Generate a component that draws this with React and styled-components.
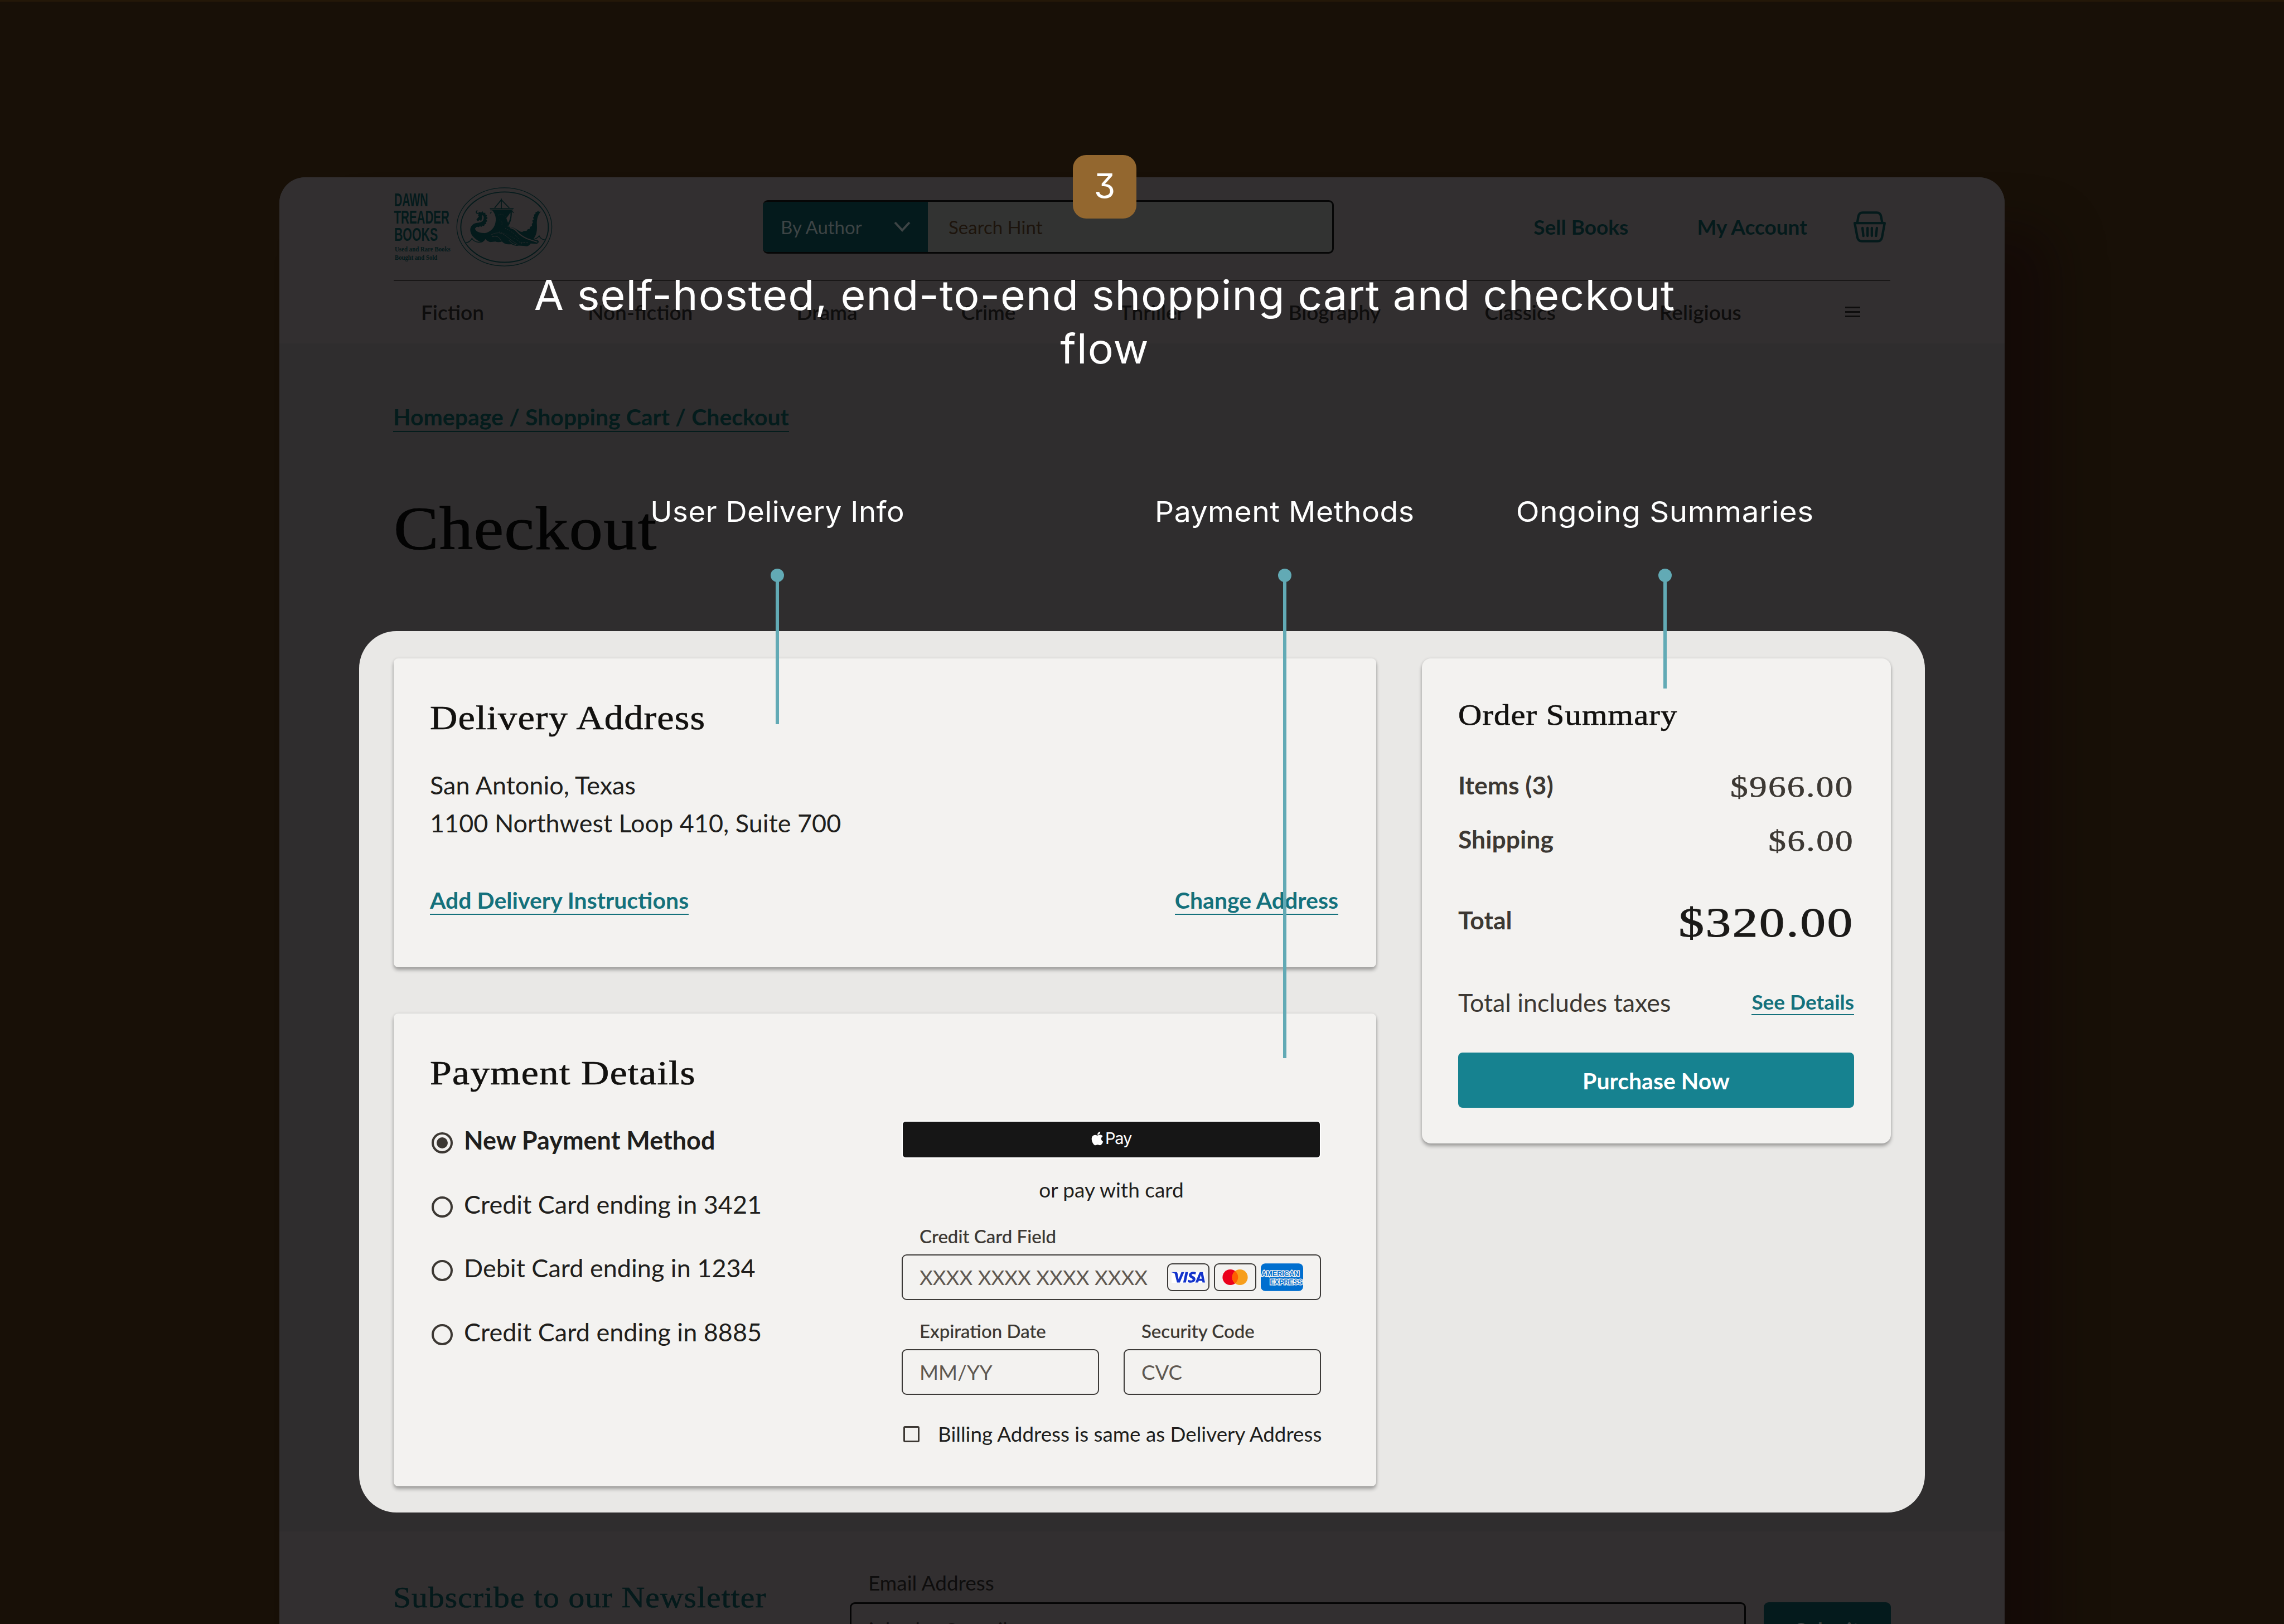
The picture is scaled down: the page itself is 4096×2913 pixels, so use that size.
import React from 'react';
import styled, { createGlobalStyle } from 'styled-components';
import { FaApple } from 'react-icons/fa';
import { SiVisa } from 'react-icons/si';

const sans = "Lato, 'Liberation Sans', sans-serif";
const serif = "'Liberation Serif', serif";
const display = "Inter, 'Liberation Sans', sans-serif";

const GlobalStyle = createGlobalStyle`
  * {
    box-sizing: border-box;
  }
  body {
    margin: 0;
    background: #181007;
    font-family: ${sans};
  }
  h1, h2, p {
    margin: 0;
    font-weight: 400;
  }
`;

const Stage = styled.div`
  position: relative;
  width: 4096px;
  height: 2913px;
  overflow: hidden;
  padding: 315px 501px 0 501px;
  background: #181007;
  border-top: 3px solid #241808;
`;

const Window = styled.div`
  height: 2700px;
  border-radius: 46px 46px 0 0;
  overflow: hidden;
  background: #2f2d2e;
  box-shadow: 90px 90px 90px rgba(14, 2, 8, 0.35);
`;

const Header = styled.header`
  height: 298px;
  padding: 0 205px;
  background: #322f30;
`;

const TopBar = styled.div`
  display: flex;
  align-items: center;
  height: 177px;
`;

const Search = styled.div`
  display: flex;
  width: 1024px;
  height: 96px;
  margin-left: 377px;
  border-radius: 9px;
  border: 3px solid #060606;
  border-left: 0;
  background: #323332;
  overflow: hidden;
`;

const SearchType = styled.div`
  display: flex;
  align-items: center;
  justify-content: space-between;
  width: 296px;
  margin: -3px 0;
  padding: 0 31px 0 32px;
  background: #041a1c;
  color: #3d4445;
  font-size: 33px;
`;

const SearchHint = styled.div`
  padding-left: 37px;
  line-height: 90px;
  font-size: 33px;
  color: #1d140c;
`;

const Actions = styled.div`
  display: flex;
  align-items: center;
  margin-left: auto;
  margin-right: 8px;
  font-size: 37px;
  font-weight: 700;
  color: #041a1b;
`;

const Action = styled.span`
  margin-right: ${(p) => p.$gap}px;
`;

const Nav = styled.nav`
  display: flex;
  align-items: center;
  justify-content: space-between;
  height: 113px;
  margin-top: 7px;
  padding: 0 54px 0 49px;
  border-top: 2px solid #191717;
  font-size: 37px;
  font-weight: 600;
  color: #0e0d0d;
`;

const Burger = styled.div`
  width: 27px;
  height: 19px;
  border: solid #0e0d0d;
  border-width: 3px 0;
  padding-top: 5px;

  &::after {
    content: '';
    display: block;
    height: 3px;
    background: #0e0d0d;
  }
`;

const Body = styled.main`
  height: 2131px;
  padding: 107px 143px 0;
`;

const Link = styled.span`
  display: inline-block;
  font-size: ${(p) => p.$size || 41}px;
  line-height: ${(p) => p.$line || 50}px;
  font-weight: 700;
  color: ${(p) => p.$color || '#14717c'};
  border-bottom: 2px solid;
`;

const Crumbs = styled.div`
  display: flex;
  margin-left: 61px;
`;

const Title = styled.h1`
  margin: 113px 0 0 62px;
  font-family: ${serif};
  font-size: 110px;
  line-height: 121px;
  letter-spacing: 1px;
  color: #030303;
  transform: scaleX(1.1);
  transform-origin: left;
  -webkit-text-stroke: 1px;
`;

const Spotlight = styled.section`
  display: grid;
  grid-template-columns: 1762px 841px;
  column-gap: 82px;
  align-items: start;
  height: 1581px;
  margin-top: 123px;
  padding: 49px 62px;
  border-radius: 67px;
  background: #e9e8e6;
`;

const Column = styled.div`
  display: flex;
  flex-direction: column;
  gap: 83px;
`;

const Card = styled.div`
  height: ${(p) => p.$height}px;
  padding: 71px 66px 0 65px;
  border-radius: ${(p) => p.$radius || 8}px;
  background: #f3f2f0;
  box-shadow: 0 5px 6px rgba(0, 0, 0, 0.3), 0 0 5px rgba(0, 0, 0, 0.1);
`;

const CardTitle = styled.h2`
  font-family: ${serif};
  font-size: ${(p) => p.$size || 61}px;
  line-height: ${(p) => p.$line || 71}px;
  letter-spacing: 1px;
  color: #12110f;
  transform: scaleX(${(p) => p.$stretch});
  transform-origin: left;
  -webkit-text-stroke: 0.7px;
`;

const Address = styled.p`
  margin-top: 52px;
  font-size: 45px;
  line-height: 67.5px;
  color: #201e1c;
`;

const Links = styled.div`
  display: flex;
  justify-content: space-between;
  margin-top: 80px;
  padding-right: 2px;
`;

const PaymentGrid = styled.div`
  display: flex;
  justify-content: space-between;
  padding-right: 33px;
`;

const Options = styled.div`
  margin-top: 28px;
  padding-left: 3px;
`;

const Option = styled.div`
  display: flex;
  align-items: center;
  height: 114.5px;
  font-size: 45px;
  font-weight: ${(p) => (p.$selected ? 700 : 400)};
  color: #201e1c;
`;

const Radio = styled.span`
  display: flex;
  align-items: center;
  justify-content: center;
  width: 38px;
  height: 38px;
  margin: 10px 20px 0 0;
  border: 4px solid #3c3833;
  border-radius: 50%;

  &::after {
    content: '';
    display: ${(p) => (p.$selected ? 'block' : 'none')};
    width: 20px;
    height: 20px;
    border-radius: 50%;
    background: #3c3833;
  }
`;

const Form = styled.div`
  width: 752px;
  margin-top: 50px;
`;

const ApplePay = styled.div`
  display: flex;
  align-items: center;
  justify-content: center;
  height: 68px;
  padding: 0 3px 5px 0;
  border: 2px solid #fff;
  border-radius: 7px;
  background: #161616;
  color: #fff;
  font-family: ${display};
  font-size: 29px;
  letter-spacing: -1.2px;
`;

const PayHint = styled.p`
  margin-top: 34px;
  text-align: center;
  font-size: 37px;
  line-height: 44px;
  color: #201e1c;
`;

const Field = styled.div`
  flex: 1;
  padding-top: ${(p) => p.$top}px;
`;

const FieldLabel = styled.div`
  padding-left: 32px;
  font-size: 33px;
  line-height: 40px;
  font-weight: 500;
  color: #3c3833;
  -webkit-text-stroke: 0.2px;
`;

const Input = styled.div`
  display: flex;
  align-items: center;
  justify-content: space-between;
  height: 82px;
  margin-top: 13px;
  padding: 0 30px 0 30px;
  border: 2.5px solid #3c3a38;
  border-radius: 9px;
  font-size: 36.7px;
  color: #5f5851;
`;

const FieldRow = styled.div`
  display: flex;
  gap: 44px;
`;

const Brands = styled.div`
  display: flex;
  gap: 8px;
`;

const Brand = styled.div`
  display: flex;
  align-items: center;
  justify-content: center;
  width: 76px;
  height: 50px;
  border: 2px solid #3c3a38;
  border-radius: 9px;
`;

const VisaPlate = styled.div`
  display: flex;
  align-items: center;
  width: 60px;
  height: 20px;
  background: #fff;
  color: #1434cb;
`;

const Billing = styled.div`
  display: flex;
  align-items: center;
  margin-top: 48px;
  padding-left: 3px;
  font-size: 36.8px;
  line-height: 44px;
  color: #201e1c;
  white-space: nowrap;
`;

const Checkbox = styled.span`
  flex-shrink: 0;
  width: 29px;
  height: 29px;
  margin-right: 33px;
  border: 3.5px solid #3c3833;
  border-radius: 3px;
`;

const Row = styled.div`
  display: flex;
  align-items: center;
  justify-content: space-between;
  height: ${(p) => p.$height || 97}px;
  margin-top: ${(p) => p.$top || 0}px;
  font-size: ${(p) => (p.$light ? 44.8 : 44.5)}px;
  font-weight: ${(p) => (p.$light ? 400 : 700)};
  color: #3c3833;
`;

const Price = styled.span`
  padding-top: ${(p) => (p.$large ? 11 : 7)}px;
  font-family: ${serif};
  font-weight: 400;
  font-size: ${(p) => (p.$large ? 75 : 52)}px;
  letter-spacing: ${(p) => (p.$large ? 2 : 1.8)}px;
  color: ${(p) => (p.$large ? '#1b1a18' : '#3c3833')};
  transform: scaleX(1.22);
  transform-origin: right;
  -webkit-text-stroke: ${(p) => (p.$large ? 1 : 0.6)}px;
`;

const Purchase = styled.div`
  height: 99px;
  margin-top: 59px;
  padding-top: 3px;
  border-radius: 8px;
  background: #168290;
  color: #fff;
  text-align: center;
  font-size: 41px;
  line-height: 95px;
  font-weight: 700;
`;

const Footer = styled.footer`
  display: flex;
  height: 260px;
  padding: 0 204px;
  background: #322f30;
`;

const Newsletter = styled.h2`
  width: 819px;
  padding-top: 88px;
  font-family: ${serif};
  font-size: 53px;
  line-height: 60px;
  letter-spacing: 1px;
  color: #041a1b;
  transform: scaleX(1.085);
  transform-origin: left;
  -webkit-text-stroke: 0.6px;
`;

const Email = styled.div`
  width: 1607px;
  padding-top: 71px;
`;

const EmailLabel = styled.div`
  padding-left: 33px;
  font-size: 37px;
  line-height: 42px;
  color: #0e0d0d;
`;

const EmailInput = styled.div`
  height: 98px;
  margin-top: 14px;
  padding-left: 31px;
  border: 3px solid #050505;
  border-radius: 9px;
  font-size: 37px;
  line-height: 92px;
  color: #141010;
`;

const Submit = styled.div`
  width: 228px;
  height: 98px;
  margin: 127px 0 0 32px;
  border-radius: 9px;
  background: #041a1c;
  color: #3d4445;
  text-align: center;
  font-size: 37px;
  line-height: 98px;
  font-weight: 700;
`;

const Badge = styled.div`
  position: absolute;
  left: 1924px;
  top: 275px;
  width: 114px;
  height: 114px;
  border-radius: 24px;
  background: #93672f;
  color: #fff;
  text-align: center;
  font-family: ${display};
  font-feature-settings: 'cv09';
  font-size: 62px;
  line-height: 112px;
`;

const Headline = styled.p`
  position: absolute;
  left: 881px;
  top: 478px;
  width: 2200px;
  text-align: center;
  font-family: ${display};
  font-size: 74px;
  line-height: 96px;
  letter-spacing: 1px;
  color: #fff;
  transform: scaleX(1.042);
`;

const Callout = styled.div`
  position: absolute;
  left: ${(p) => p.$x}px;
  top: 884px;
  display: flex;
  flex-direction: column;
  align-items: center;
  width: 700px;
  margin-left: -350px;
`;

const CalloutText = styled.div`
  font-family: ${display};
  font-size: 51px;
  line-height: 62px;
  letter-spacing: 0.5px;
  color: #fff;
  white-space: nowrap;
  transform: scaleX(${(p) => p.$stretch});
`;

const Pin = styled.div`
  width: 6px;
  height: ${(p) => p.$length}px;
  margin-top: 83px;
  background: #62aab5;

  &::before {
    content: '';
    display: block;
    width: 24px;
    height: 24px;
    margin: -12px 0 0 -9px;
    border-radius: 50%;
    background: #62aab5;
  }
`;

const categories = [
  'Fiction',
  'Non-fiction',
  'Drama',
  'Crime',
  'Thriller',
  'Biography',
  'Classics',
  'Religious',
];

const methods = [
  'New Payment Method',
  'Credit Card ending in 3421',
  'Debit Card ending in 1234',
  'Credit Card ending in 8885',
];

const callouts = [
  { text: 'User Delivery Info', x: 1394, length: 267, stretch: 1.035 },
  { text: 'Payment Methods', x: 2304, length: 866, stretch: 1.05 },
  { text: 'Ongoing Summaries', x: 2986, length: 203, stretch: 1.073 },
];

function Logo() {
  return (
    <svg width="285" height="142" viewBox="130 58 1322 660" fill="#041a1b">
      <g fontFamily="'Liberation Sans', sans-serif" fontSize="157" fontWeight="700">
        <text x="133" y="218" textLength="282" lengthAdjust="spacingAndGlyphs">DAWN</text>
        <text x="131" y="360" textLength="462" lengthAdjust="spacingAndGlyphs">TREADER</text>
        <text x="133" y="502" textLength="364" lengthAdjust="spacingAndGlyphs">BOOKS</text>
      </g>
      <g fontFamily="'Liberation Serif', serif" fontSize="56" fontWeight="700">
        <text x="138" y="593" textLength="464" lengthAdjust="spacingAndGlyphs">Used and Rare Books</text>
        <text x="138" y="660" textLength="354" lengthAdjust="spacingAndGlyphs">Bought and Sold</text>
      </g>
      <g fill="none" stroke="#041a1b">
        <ellipse cx="1051" cy="388" rx="396" ry="326" strokeWidth="6" />
        <ellipse cx="1053" cy="390" rx="365" ry="293" strokeWidth="9" />
        <path d="M732 520Q764 516 781 484Q800 514 836 516T886 492" strokeWidth="7" />
        <path d="M1288 494Q1326 486 1341 462Q1352 490 1388 496" strokeWidth="7" />
        <path d="M1026 152V236M1026 162L970 230M1026 162L1092 230" strokeWidth="8" />
        <path d="M930 236H1128M934 246H1124M944 262L934 275M1112 254L1128 270" strokeWidth="7" />
        <path d="M1110 246Q1116 330 1080 384" strokeWidth="6" />
      </g>
      {/* neck and head */}
      <path d="M896 440C850 440 812 430 806 402L822 386L836 390L848 382L860 388L868 378L882 380L888 366L900 362L896 348L910 340L900 328L912 314L902 304L906 290L894 286L892 270L878 272L870 258L858 268L844 262L838 274L832 296L840 300L818 328L830 342L846 330L858 340L866 312L864 290C878 290 882 306 878 322C874 344 856 352 822 354C784 360 762 390 768 424C774 462 812 496 858 516C878 510 888 498 896 486Z" />
      <path
        d="M826 250Q808 264 824 276Q834 276 846 268"
        fill="none"
        stroke="#041a1b"
        strokeWidth="8"
      />
      {/* sail, hull, wing and tail */}
      <path d="M948 246C976 280 984 310 978 346C972 392 940 430 888 440L892 486Q912 516 944 514L976 510Q1000 520 1032 510Q1056 540 1110 532Q1136 550 1172 544Q1210 546 1240 550Q1266 540 1270 526L1322 530Q1350 514 1330 500L1290 492C1320 460 1326 420 1322 360C1322 320 1330 290 1354 260L1338 262L1334 252L1322 264L1312 262L1310 280L1298 286L1300 302L1290 310L1296 326L1284 336L1290 352L1280 364L1282 380L1266 388L1262 404L1246 408L1236 422L1216 422L1200 430C1170 430 1140 384 1076 384C1090 366 1112 330 1110 246Z" />
      <g fill="none" stroke="#322f30" strokeWidth="5" strokeLinecap="round">
        <path d="M1100 394Q1134 400 1160 430T1240 486Q1280 500 1322 514" strokeWidth="9" />
        <path d="M944 452Q1010 418 1060 460T1160 532" strokeWidth="3" />
        <path d="M950 470Q1000 450 1026 506M1090 500Q1110 528 1150 536" strokeWidth="4" />
        <path d="M1060 400Q1130 430 1180 500" strokeWidth="4" strokeDasharray="4 16" />
        <path d="M1010 430Q1100 450 1200 530" strokeWidth="4" strokeDasharray="3 16" />
        <path d="M1000 290Q1030 270 1060 300T1100 290M1010 330Q1040 350 1030 370" strokeWidth="3" strokeDasharray="3 13" />
        <path d="M1180 520Q1220 510 1256 524" strokeDasharray="3 10" />
      </g>
      <path d="M1068 316L1102 268Q1106 320 1082 354Z" fill="#322f30" />
    </svg>
  );
}

function Chevron() {
  return (
    <svg width="30" height="19" viewBox="0 0 30 19" fill="none" stroke="#3d4445" strokeWidth="4">
      <path d="M2 2L15 16L28 2" />
    </svg>
  );
}

function Basket() {
  return (
    <svg
      width="58"
      height="56"
      viewBox="150 80 270 258"
      fill="none"
      stroke="#041a1b"
      strokeWidth="20"
      strokeLinecap="round"
      strokeLinejoin="round"
    >
      <path d="M182 170L190 122Q196 90 226 90H344Q374 90 380 122L389 170" />
      <path d="M160 177H410L388 296Q380 328 350 328H220Q190 328 182 296Z" />
      <path d="M225 218L232 284M267 218V284M303 218V284M345 218L338 284" />
    </svg>
  );
}

function Mastercard() {
  return (
    <svg width="46" height="28" viewBox="0 0 210 130">
      <circle cx="65" cy="65" r="65" fill="#eb001b" />
      <circle cx="145" cy="65" r="65" fill="#f79e1b" />
      <path d="M105 14A65 65 0 0 1 105 116A65 65 0 0 1 105 14Z" fill="#ff5f00" />
    </svg>
  );
}

function Amex() {
  return (
    <svg width="76" height="50" viewBox="0 0 352 230">
      <rect width="352" height="230" rx="38" fill="#006fcf" />
      <g
        fill="#006fcf"
        stroke="#f3f2f0"
        strokeWidth="14"
        paintOrder="stroke"
        fontFamily="'Liberation Sans', sans-serif"
        fontWeight="700"
        fontSize="60"
      >
        <text x="6" y="105" textLength="314" lengthAdjust="spacingAndGlyphs">AMERICAN</text>
        <text x="76" y="177" textLength="272" lengthAdjust="spacingAndGlyphs">EXPRESS</text>
      </g>
    </svg>
  );
}

function SiteHeader() {
  return (
    <Header>
      <TopBar>
        <Logo />
        <Search>
          <SearchType>
            By Author
            <Chevron />
          </SearchType>
          <SearchHint>Search Hint</SearchHint>
        </Search>
        <Actions>
          <Action $gap={123}>Sell Books</Action>
          <Action $gap={83}>My Account</Action>
          <Basket />
        </Actions>
      </TopBar>
      <Nav>
        {categories.map((name) => (
          <span key={name}>{name}</span>
        ))}
        <Burger />
      </Nav>
    </Header>
  );
}

function PaymentForm() {
  return (
    <Form>
      <ApplePay>
        <FaApple size={28} />
        Pay
      </ApplePay>
      <PayHint>or pay with card</PayHint>
      <Field $top={41}>
        <FieldLabel>Credit Card Field</FieldLabel>
        <Input>
          XXXX XXXX XXXX XXXX
          <Brands>
            <Brand>
              <VisaPlate>
                <SiVisa size={60} />
              </VisaPlate>
            </Brand>
            <Brand>
              <Mastercard />
            </Brand>
            <Amex />
          </Brands>
        </Input>
      </Field>
      <FieldRow>
        <Field $top={35}>
          <FieldLabel>Expiration Date</FieldLabel>
          <Input>MM/YY</Input>
        </Field>
        <Field $top={35}>
          <FieldLabel>Security Code</FieldLabel>
          <Input>CVC</Input>
        </Field>
      </FieldRow>
      <Billing>
        <Checkbox />
        Billing Address is same as Delivery Address
      </Billing>
    </Form>
  );
}

function OrderSummary() {
  return (
    <Card $height={870} $radius={16}>
      <CardTitle $size={53} $line={60} $stretch={1.105}>Order Summary</CardTitle>
      <Row $top={47}>
        Items (3)
        <Price>$966.00</Price>
      </Row>
      <Row>
        Shipping
        <Price>$6.00</Price>
      </Row>
      <Row $top={48}>
        Total
        <Price $large>$320.00</Price>
      </Row>
      <Row $top={69} $height={62} $light>
        Total includes taxes
        <Link $size={37} $line={44}>See Details</Link>
      </Row>
      <Purchase>Purchase Now</Purchase>
    </Card>
  );
}

function App() {
  return (
    <Stage>
      <GlobalStyle />
      <Window>
        <SiteHeader />
        <Body>
          <Crumbs>
            <Link $color="#041c1c">Homepage / Shopping Cart / Checkout</Link>
          </Crumbs>
          <Title>Checkout</Title>
          <Spotlight>
            <Column>
              <Card $height={554}>
                <CardTitle $stretch={1.12}>Delivery Address</CardTitle>
                <Address>
                  San Antonio, Texas
                  <br />
                  1100 Northwest Loop 410, Suite 700
                </Address>
                <Links>
                  <Link $line={49}>Add Delivery Instructions</Link>
                  <Link $line={49}>Change Address</Link>
                </Links>
              </Card>
              <Card $height={848}>
                <CardTitle $stretch={1.145}>Payment Details</CardTitle>
                <PaymentGrid>
                  <Options>
                    {methods.map((method, i) => (
                      <Option key={method} $selected={i === 0}>
                        <Radio $selected={i === 0} />
                        {method}
                      </Option>
                    ))}
                  </Options>
                  <PaymentForm />
                </PaymentGrid>
              </Card>
            </Column>
            <OrderSummary />
          </Spotlight>
        </Body>
        <Footer>
          <Newsletter>Subscribe to our Newsletter</Newsletter>
          <Email>
            <EmailLabel>Email Address</EmailLabel>
            <EmailInput>johndoe@gmail.com</EmailInput>
          </Email>
          <Submit>Submit</Submit>
        </Footer>
      </Window>
      <Badge>3</Badge>
      <Headline>
        A self-hosted, end-to-end shopping cart and checkout
        <br />
        flow
      </Headline>
      {callouts.map((c) => (
        <Callout key={c.text} $x={c.x}>
          <CalloutText $stretch={c.stretch}>{c.text}</CalloutText>
          <Pin $length={c.length} />
        </Callout>
      ))}
    </Stage>
  );
}

export default App;
